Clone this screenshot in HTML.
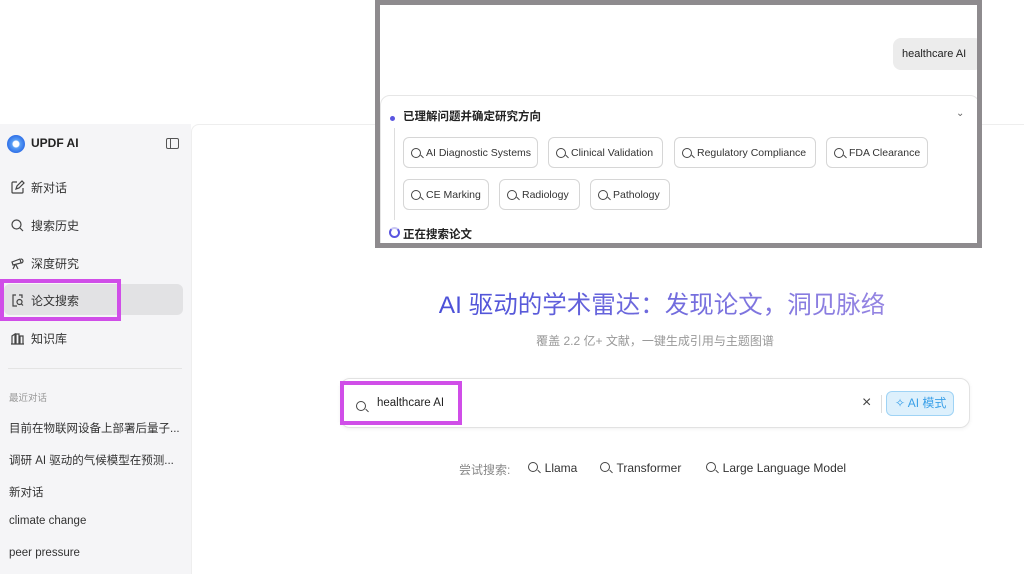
<!DOCTYPE html>
<html><head><meta charset="utf-8"><style>
*{margin:0;padding:0;box-sizing:border-box}
body{width:1024px;height:574px;position:relative;overflow:hidden;background:#fff;font-family:"Liberation Sans","Noto Sans CJK SC",sans-serif;color:#222}
.abs{position:absolute}
#side{left:0;top:124px;width:191px;height:450px;background:#f5f5f7}
#main{left:191px;top:124px;width:833px;height:450px;background:#fff;border-left:1px solid #eee;border-top:1px solid #eee;border-radius:8px 0 0 0}
.nav{position:absolute;left:10px;font-size:12px;color:#333;display:flex;align-items:center;gap:6px}
.nav svg{width:15px;height:15px}
.rec{position:absolute;left:9px;font-size:11.5px;color:#333;white-space:nowrap}
.chip{position:absolute;height:31px;border:1px solid #d6d6d6;border-radius:6px;font-size:10.5px;color:#333;display:flex;align-items:center;padding:0 7px;gap:5px;background:#fff;white-space:nowrap;overflow:hidden}
.q{width:10px;height:10px;flex:none;border:1.3px solid #444;border-radius:50%;position:relative;display:inline-block}
.q:after{content:"";position:absolute;width:4px;height:1.3px;background:#444;right:-3.5px;bottom:-1px;transform:rotate(45deg)}
</style></head><body>
<div id="side" class="abs"></div>
<div id="main" class="abs"></div>
<!-- sidebar -->
<div class="abs" style="left:7px;top:135px;width:18px;height:18px;border-radius:50%;background:radial-gradient(circle,#fff 0 3px,#5aa0f5 4px,#2f6fe8 9px)"></div>
<div class="abs" style="left:31px;top:136px;font-size:12px;font-weight:bold">UPDF AI</div>
<div class="abs" style="left:166px;top:138px;width:13px;height:11px;border:1.3px solid #555;border-radius:2px"><div style="position:absolute;left:3px;top:0;width:1.3px;height:9px;background:#555"></div></div>
<div class="nav" style="top:179px"><svg viewBox="0 0 15 15" fill="none" stroke="#444" stroke-width="1.2"><path d="M7 2H3a1 1 0 0 0-1 1v9a1 1 0 0 0 1 1h9a1 1 0 0 0 1-1V8"/><path d="M6 9l1-3 5-5 2 2-5 5z"/></svg>新对话</div>
<div class="nav" style="top:217px"><svg viewBox="0 0 15 15" fill="none" stroke="#444" stroke-width="1.2"><circle cx="6.5" cy="6.5" r="4.5"/><path d="M10 10l3 3"/></svg>搜索历史</div>
<div class="nav" style="top:255px"><svg viewBox="0 0 15 15" fill="none" stroke="#444" stroke-width="1.2"><path d="M2 6l8-3 1 4-8 2z M5 9l-2 4M6 9l2 4M11 3a2 2 0 1 1 0 4"/></svg>深度研究</div>
<div class="abs" style="left:4px;top:284px;width:179px;height:31px;background:#e2e2e4;border-radius:6px"></div>
<div class="nav" style="top:292px"><svg viewBox="0 0 15 15" fill="none" stroke="#444" stroke-width="1.2"><path d="M6 2H3v11h4M9 2h3v3"/><circle cx="9.5" cy="9" r="2.5"/><path d="M11.3 10.8l1.7 1.7"/></svg>论文搜索</div>
<div class="abs" style="left:0;top:279px;width:121px;height:42px;border:4px solid #d04ee8"></div>
<div class="nav" style="top:330px"><svg viewBox="0 0 15 15" fill="none" stroke="#444" stroke-width="1.2"><path d="M2 13V5l3-2v10M6 13V3h3v10M10 13V5h3v8M1 13h13"/></svg>知识库</div>
<div class="abs" style="left:8px;top:368px;width:174px;height:1px;background:#e4e4e4"></div>
<div class="rec" style="top:390px;font-size:9.5px;color:#999">最近对话</div>
<div class="rec" style="top:420px">目前在物联网设备上部署后量子...</div>
<div class="rec" style="top:452px">调研 AI 驱动的气候模型在预测...</div>
<div class="rec" style="top:484px">新对话</div>
<div class="rec" style="top:515px">climate change</div>
<div class="rec" style="top:547px">peer pressure</div>
<!-- main -->
<div class="abs" style="left:340px;top:286px;width:644px;text-align:center;font-size:24.5px;white-space:nowrap"><span style="background:linear-gradient(90deg,#4b50d8,#9585e2);-webkit-background-clip:text;color:transparent">AI 驱动的学术雷达：发现论文，洞见脉络</span></div>
<div class="abs" style="left:340px;top:332px;width:630px;text-align:center;font-size:12px;color:#999">覆盖 2.2 亿+ 文献，一键生成引用与主题图谱</div>
<div class="abs" style="left:340px;top:378px;width:630px;height:50px;border:1px solid #e2e2e2;border-radius:10px;box-shadow:0 1px 4px rgba(0,0,0,.06)"></div>
<div class="abs" style="left:340px;top:381px;width:122px;height:44px;border:4px solid #d04ee8;background:#fff"></div>
<div class="abs" style="left:356px;top:398px"><span class="q"></span></div>
<div class="abs" style="left:377px;top:397px;font-size:11.5px">healthcare AI</div>
<div class="abs" style="left:862px;top:394px;font-size:16px;color:#444">×</div>
<div class="abs" style="left:881px;top:395px;width:1px;height:18px;background:#ddd"></div>
<div class="abs" style="left:886px;top:391px;width:68px;height:25px;border:1px solid #9fd3f5;background:#ddf0fc;border-radius:6px;color:#3aa0e8;font-size:12px;line-height:23px;padding-left:8px">✧ AI 模式</div>
<div class="abs" style="left:459px;top:461px;font-size:12px;color:#888">尝试搜索:</div>
<div class="abs" style="left:528px;top:461px;font-size:12px;color:#333"><span class="q"></span>&nbsp; Llama</div>
<div class="abs" style="left:600px;top:461px;font-size:12px;color:#333"><span class="q"></span>&nbsp; Transformer</div>
<div class="abs" style="left:706px;top:461px;font-size:12px;color:#333"><span class="q"></span>&nbsp; Large Language Model</div>
<!-- overlay -->
<div class="abs" style="left:375px;top:0;width:607px;height:248px;border:5px solid #8e8b8e;background:#fff;overflow:hidden">
 <div class="abs" style="left:513px;top:33px;width:90px;height:32px;background:#ececec;border-radius:8px;font-size:11px;line-height:32px;padding-left:9px">healthcare AI</div>
 <div class="abs" style="left:0;top:90px;width:600px;height:160px;border:1px solid #e6e6e6;border-radius:10px"></div>
 <div class="abs" style="left:10px;top:111px;width:5px;height:5px;border-radius:50%;background:#5a55e0"></div>
 <div class="abs" style="left:23px;top:103px;font-size:11.5px;font-weight:bold">已理解问题并确定研究方向</div>
 <div class="abs" style="left:576px;top:103px;font-size:10px;color:#666">⌄</div>
 <div class="abs" style="left:14px;top:123px;width:1px;height:92px;background:#ddd"></div>
 <div class="chip" style="left:23px;top:132px;width:135px"><span class="q"></span>AI Diagnostic Systems</div>
 <div class="chip" style="left:168px;top:132px;width:115px"><span class="q"></span>Clinical Validation</div>
 <div class="chip" style="left:294px;top:132px;width:142px"><span class="q"></span>Regulatory Compliance</div>
 <div class="chip" style="left:446px;top:132px;width:102px"><span class="q"></span>FDA Clearance</div>
 <div class="chip" style="left:23px;top:174px;width:86px"><span class="q"></span>CE Marking</div>
 <div class="chip" style="left:119px;top:174px;width:81px"><span class="q"></span>Radiology</div>
 <div class="chip" style="left:210px;top:174px;width:80px"><span class="q"></span>Pathology</div>
 <div class="abs" style="left:9px;top:222px;width:11px;height:11px;border-radius:50%;border:2px solid #5a55e0;border-top-color:#c8c6f3"></div>
 <div class="abs" style="left:23px;top:221px;font-size:11.5px;font-weight:bold">正在搜索论文</div>
</div>
</body></html>
